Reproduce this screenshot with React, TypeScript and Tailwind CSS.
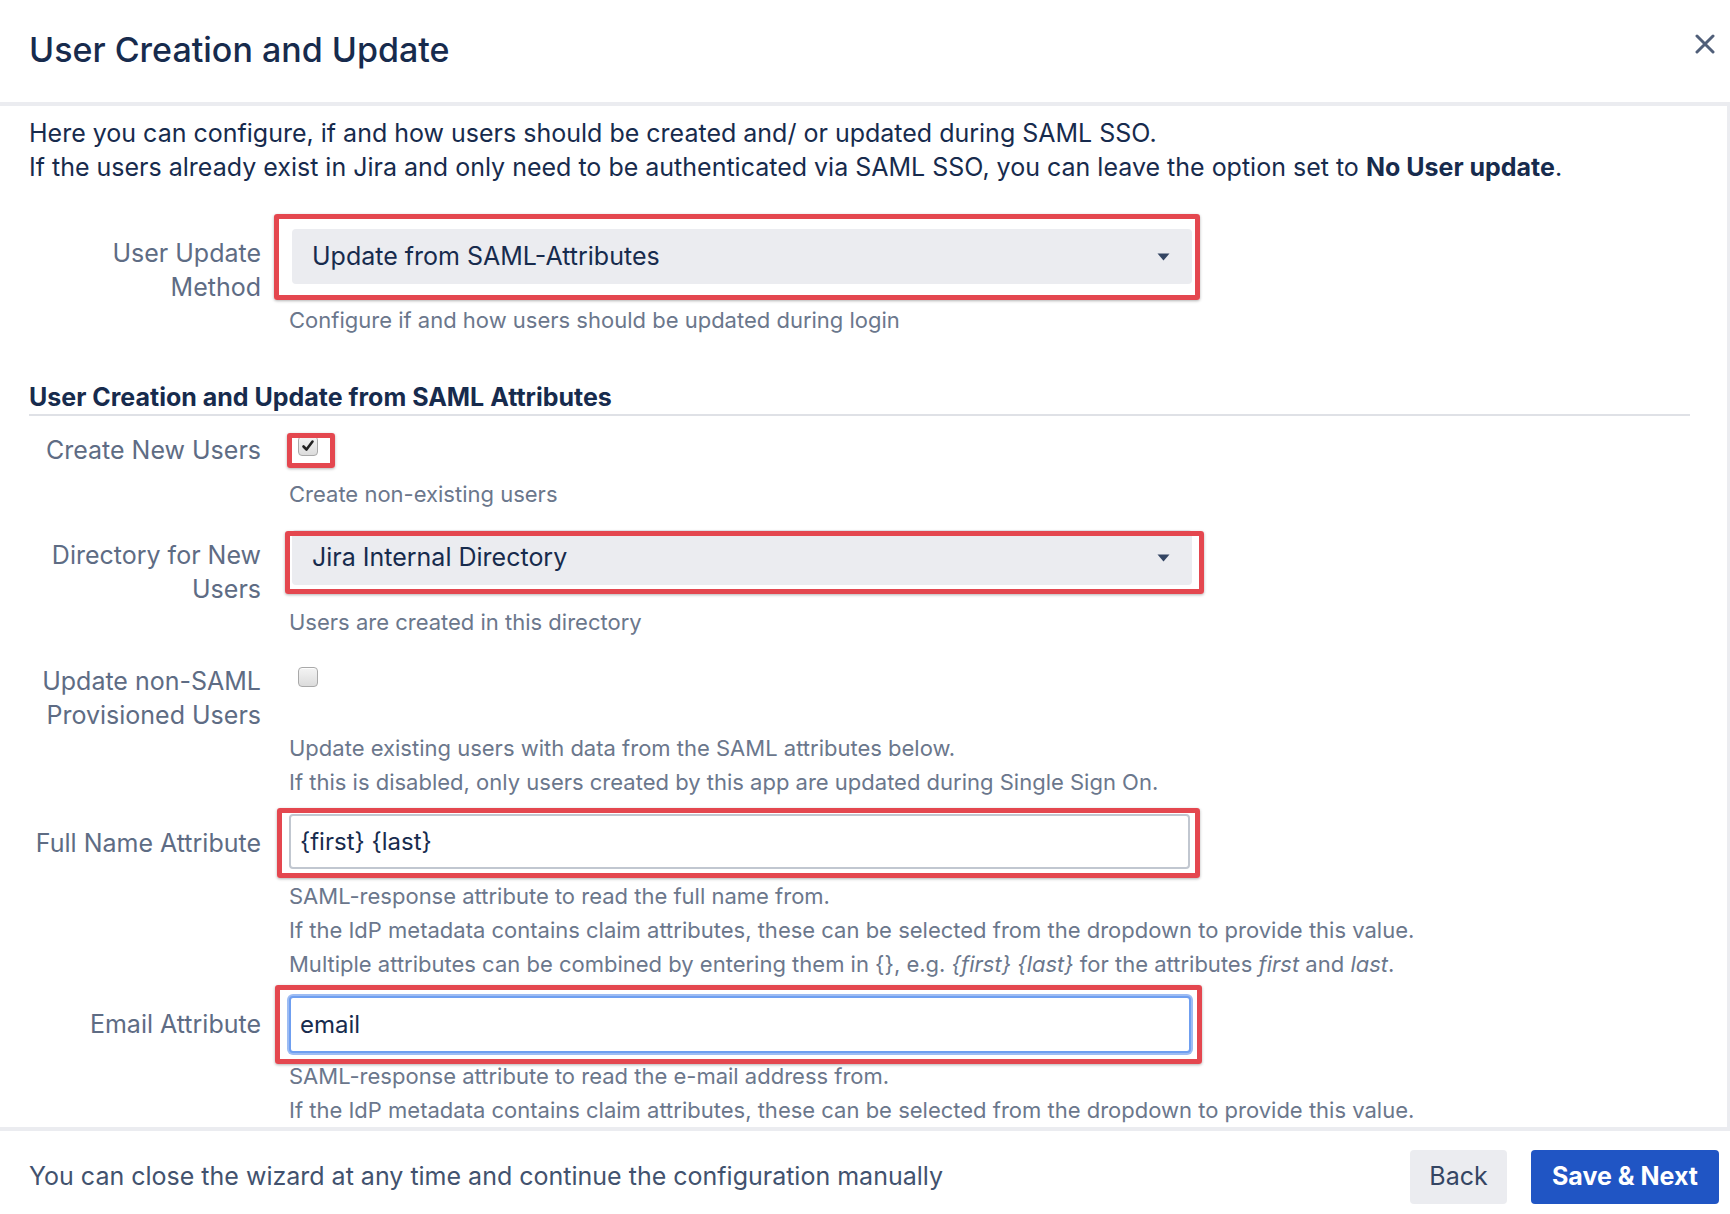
import { ReactNode } from 'react'

const font = { fontFamily: "Inter, 'Noto Sans', sans-serif" }

function Label({ children, pt }: { children: ReactNode; pt: string }) {
  return (
    <div className={`w-[232px] shrink-0 text-right text-[25px] leading-[34px] text-[#5e6c84] ${pt}`}>
      {children}
    </div>
  )
}

function Help({ children }: { children: ReactNode }) {
  return <div className="text-[22px] leading-[34px] text-[#6b778c]">{children}</div>
}

function Arrow() {
  return (
    <svg width="13" height="8" viewBox="0 0 13 8" className="shrink-0">
      <path d="M0.5 0.5 L12.5 0.5 L6.5 7.5 Z" fill="#344563" />
    </svg>
  )
}

function Select({ value }: { value: string }) {
  return (
    <div className="flex h-[55px] w-[900px] items-center justify-between rounded-[4px] bg-[#ebecf0] pl-[20px] pr-[22px] text-[25px] text-[#172b4d]">
      <span>{value}</span>
      <Arrow />
    </div>
  )
}

function Checkbox({ checked }: { checked?: boolean }) {
  return (
    <div className="flex h-[20px] w-[20px] items-center justify-center rounded-[4px] border border-[#a9a9a9] bg-gradient-to-b from-[#f4f4f4] to-[#dcdcdc] shadow-[inset_0_1px_0_rgba(255,255,255,0.8)]">
      {checked && (
        <svg width="14" height="14" viewBox="0 0 14 14">
          <path d="M2.5 7.5 L5.5 10.5 L11.5 2.5" fill="none" stroke="#222" strokeWidth="2.6" strokeLinecap="round" strokeLinejoin="round" />
        </svg>
      )}
    </div>
  )
}

const redBox = 'pointer-events-none absolute rounded-[3px] border-[5px] border-[#e4474f] shadow-[0_1px_3px_rgba(0,0,0,0.3)]'

export default function App() {
  return (
    <div className="flex h-[1214px] w-[1730px] flex-col overflow-hidden bg-white" style={font}>
      {/* Header */}
      <div className="flex h-[102px] shrink-0 items-start justify-between pl-[29px] pr-[15px]">
        <h1 className="mt-[27px] text-[34px] font-medium leading-[46px] text-[#172b4d]">User Creation and Update</h1>
        <button className="mt-[34px] text-[#505f79]">
          <svg width="20" height="20" viewBox="0 0 20 20">
            <path d="M2 2 L18 18 M18 2 L2 18" stroke="currentColor" strokeWidth="3" strokeLinecap="round" />
          </svg>
        </button>
      </div>
      <div className="h-[4px] shrink-0 bg-[#ebecf0]" />

      {/* Content */}
      <div className="h-[1021px] shrink-0 overflow-hidden border-r-[3px] border-[#ebecf0] pl-[29px] pr-[37px] pt-[10px]">
        <p className="text-[25px] leading-[34px] text-[#172b4d]">
          Here you can configure, if and how users should be created and/ or updated during SAML SSO.
          <br />
          If the users already exist in Jira and only need to be authenticated via SAML SSO, you can leave the option set to{' '}
          <b className="font-bold">No User update</b>.
        </p>

        {/* User Update Method */}
        <div className="mt-[45px] flex gap-[28px]">
          <Label pt="pt-[7px]">
            User Update
            <br />
            Method
          </Label>
          <div>
            <div className="relative ml-[3px] w-fit">
              <Select value="Update from SAML-Attributes" />
              <div className={`${redBox} -bottom-[16px] -left-[18px] -right-[8px] -top-[15px]`} />
            </div>
            <div className="mt-[19px]">
              <Help>Configure if and how users should be updated during login</Help>
            </div>
          </div>
        </div>

        <h2 className="mt-[43px] border-b-2 border-[#dfe1e6] text-[25px] font-bold leading-[34px] text-[#172b4d]">
          User Creation and Update from SAML Attributes
        </h2>

        {/* Create New Users */}
        <div className="mt-[17px] flex gap-[28px]">
          <Label pt="pt-0">Create New Users</Label>
          <div>
            <div className="h-[34px] pl-[9px] pt-[3px]">
              <div className="relative w-[20px]">
                <Checkbox checked />
                <div className={`${redBox} -bottom-[12px] -left-[11px] -right-[17px] -top-[3px]`} />
              </div>
            </div>
            <div className="mt-[10px]">
              <Help>Create non-existing users</Help>
            </div>
          </div>
        </div>

        {/* Directory */}
        <div className="mt-[19px] flex gap-[28px]">
          <Label pt="pt-[8px]">
            Directory for New
            <br />
            Users
          </Label>
          <div>
            <div className="relative ml-[3px] w-fit">
              <Select value="Jira Internal Directory" />
              <div className={`${redBox} -bottom-[9px] -left-[7px] -right-[12px] top-[1px]`} />
            </div>
            <div className="mt-[20px]">
              <Help>Users are created in this directory</Help>
            </div>
          </div>
        </div>

        {/* Update non-SAML */}
        <div className="mt-[25px] flex gap-[28px]">
          <Label pt="pt-0">
            Update non-SAML
            <br />
            Provisioned Users
          </Label>
          <div>
            <div className="h-[67px] pl-[9px] pt-[3px]">
              <Checkbox />
            </div>
            <Help>Update existing users with data from the SAML attributes below.</Help>
            <Help>If this is disabled, only users created by this app are updated during Single Sign On.</Help>
          </div>
        </div>

        {/* Full Name */}
        <div className="mt-[15px] flex gap-[28px]">
          <Label pt="pt-[12px]">Full Name Attribute</Label>
          <div>
            <div className="relative w-fit">
              <div className="flex h-[55px] w-[901px] items-center rounded-[4px] border-2 border-[#c1c7d0] bg-white pl-[9px] text-[24px] text-[#172b4d]">
                {'{first} {last}'}
              </div>
              <div className={`${redBox} -bottom-[9px] -left-[12px] -right-[10px] -top-[6px]`} />
            </div>
            <div className="mt-[10px]">
              <Help>SAML-response attribute to read the full name from.</Help>
              <Help>If the IdP metadata contains claim attributes, these can be selected from the dropdown to provide this value.</Help>
              <Help>
                Multiple attributes can be combined by entering them in {'{}'}, e.g. <i>{'{first} {last}'}</i> for the attributes{' '}
                <i>first</i> and <i>last</i>.
              </Help>
            </div>
          </div>
        </div>

        {/* Email */}
        <div className="mt-[15px] flex gap-[28px]">
          <Label pt="pt-[11px]">Email Attribute</Label>
          <div>
            <div className="relative w-fit">
              <div className="flex h-[57px] w-[902px] items-center rounded-[4px] border-2 border-[#6f9ff0] bg-white pl-[9px] text-[24px] text-[#172b4d] shadow-[0_0_0_2px_#9dbcf3]">
                email
              </div>
              <div className={`${redBox} -bottom-[11px] -left-[14px] -right-[11px] -top-[11px]`} />
            </div>
            <div className="mt-[6px]">
              <Help>SAML-response attribute to read the e-mail address from.</Help>
              <Help>If the IdP metadata contains claim attributes, these can be selected from the dropdown to provide this value.</Help>
            </div>
          </div>
        </div>
      </div>
      <div className="h-[4px] shrink-0 bg-[#ebecf0]" />

      {/* Footer */}
      <div className="flex flex-1 items-start justify-between pl-[29px] pr-[11px] pt-[19px]">
        <div className="flex h-[54px] items-center text-[25px] text-[#42526e]">
          You can close the wizard at any time and continue the configuration manually
        </div>
        <div className="flex gap-[24px]">
          <button className="h-[54px] w-[97px] rounded-[4px] bg-[#ebecf0] text-[25px] text-[#344563]">Back</button>
          <button className="h-[54px] w-[188px] rounded-[4px] bg-[#2055c4] text-[25px] font-bold text-white">Save &amp; Next</button>
        </div>
      </div>
    </div>
  )
}
